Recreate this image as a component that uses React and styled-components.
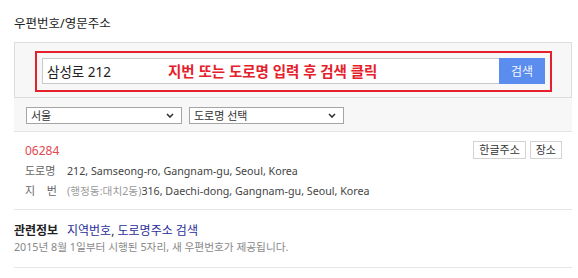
import React from "react";
import styled, { createGlobalStyle } from "styled-components";

// =================== Global ===================
const GlobalStyle = createGlobalStyle`
  body {
    margin: 0;
    background: #fff;
    font-family: "Noto Sans", "Noto Sans CJK KR", sans-serif;
    color: #333;
  }
  * {
    box-sizing: border-box;
  }
`;

// =================== Styled Components ===================
const Page = styled.div`
  padding: 15px 6px 0 14px;
`;

const Title = styled.h2`
  margin: 0;
  font-size: 12.5px;
  line-height: 18px;
  font-weight: normal;
  color: #222;
`;

const SearchPanel = styled.div`
  margin-top: 9px;
  background: #f7f7f7;
  border: 1px solid #dddddd;
  padding: 8px 19px 5px 20px;
`;

const Highlight = styled.div`
  position: relative;
  display: flex;
  border: 2px solid #e5202b;
  padding: 5px 5px 6px 5px;
`;

const SearchInput = styled.input`
  flex: 1;
  height: 26px;
  border: 1px solid #c9c9c9;
  border-right: none;
  background: #fff;
  padding: 0 4px;
  font: inherit;
  font-size: 13.5px;
  color: #222;
  outline: none;
`;

const SearchButton = styled.button`
  width: 46px;
  height: 26px;
  border: none;
  background: #5b8def;
  color: #f4f7ff;
  font: inherit;
  font-size: 12px;
  cursor: pointer;
`;

const Annotation = styled.span`
  position: absolute;
  left: 131px;
  top: 8px;
  line-height: 20px;
  font-size: 14.5px;
  font-weight: bold;
  color: #e5202b;
  pointer-events: none;
  white-space: nowrap;
`;

const FilterRow = styled.div`
  display: flex;
  gap: 7px;
  background: #f7f7f7;
  padding: 9px 12px 7px;
  border-bottom: 1px solid #e3e3e3;
`;

const SelectBox = styled.div`
  position: relative;
  width: ${(p) => p.$width}px;
  height: 17px;
  border: 1px solid #a5a5a5;
  background: #fff;
  padding-left: 4px;
  font-size: 11px;
  line-height: 15px;
  color: #333;

  svg {
    position: absolute;
    right: 7px;
    top: 5px;
  }
`;

const Results = styled.div`
  padding: 9px 10px 8px 11px;
  border-bottom: 1px solid #e6e6e6;
`;

const HeaderRow = styled.div`
  display: flex;
  justify-content: space-between;
  align-items: flex-start;
`;

const Zip = styled.div`
  font-size: 12px;
  line-height: 20px;
  color: #e34850;
`;

const Actions = styled.div`
  display: flex;
  gap: 4px;
`;

const SmallButton = styled.button`
  height: 18px;
  padding: 0 5px;
  border: 1px solid #d3d3d3;
  background: #fff;
  font: inherit;
  font-size: 11px;
  line-height: 16px;
  color: #333;
`;

const AddrRow = styled.div`
  display: flex;
  font-size: 10.7px;
  line-height: 20px;
  color: #444;
`;

const Label = styled.span`
  flex: none;
  width: 42px;
  color: #666;
  font-size: 11px;

  span {
    display: inline-block;
    width: 32px;
    text-align: justify;
    text-align-last: justify;
  }
`;

const Note = styled.span`
  color: #9a9a9a;
`;

const Info = styled.div`
  padding: 13px 0 12px;
  border-bottom: 1px solid #e6e6e6;
`;

const InfoLine = styled.div`
  font-size: 12px;
  line-height: 16px;

  strong {
    display: inline-block;
    width: 53px;
    color: #222;
  }

  a {
    color: #2a2f9a;
    text-decoration: none;
  }
`;

const InfoNote = styled.div`
  font-size: 10.7px;
  line-height: 16px;
  color: #888;
`;

// =================== Icons ===================
const Chevron = () => (
  <svg width="8" height="5" viewBox="0 0 8 5">
    <path d="M1 1 L4 4 L7 1" fill="none" stroke="#333" strokeWidth="1.6" />
  </svg>
);

// ====================== Component ======================
const App = () => {
  return (
    <Page>
      <GlobalStyle />
      <Title>우편번호/영문주소</Title>

      <SearchPanel>
        <Highlight>
          <SearchInput type="text" defaultValue="삼성로 212" />
          <SearchButton>검색</SearchButton>
          <Annotation>지번 또는 도로명 입력 후 검색 클릭</Annotation>
        </Highlight>
      </SearchPanel>

      <FilterRow>
        <SelectBox $width={156}>
          서울
          <Chevron />
        </SelectBox>
        <SelectBox $width={155}>
          도로명 선택
          <Chevron />
        </SelectBox>
      </FilterRow>

      <Results>
        <HeaderRow>
          <Zip>06284</Zip>
          <Actions>
            <SmallButton>한글주소</SmallButton>
            <SmallButton>장소</SmallButton>
          </Actions>
        </HeaderRow>
        <AddrRow>
          <Label>
            <span>도로명</span>
          </Label>
          212, Samseong-ro, Gangnam-gu, Seoul, Korea
        </AddrRow>
        <AddrRow>
          <Label>
            <span>지 번</span>
          </Label>
          <span>
            <Note>(행정동:대치2동)</Note>316, Daechi-dong, Gangnam-gu, Seoul, Korea
          </span>
        </AddrRow>
      </Results>

      <Info>
        <InfoLine>
          <strong>관련정보</strong>
          <a href="#">지역번호</a>, <a href="#">도로명주소 검색</a>
        </InfoLine>
        <InfoNote>2015년 8월 1일부터 시행된 5자리, 새 우편번호가 제공됩니다.</InfoNote>
      </Info>
    </Page>
  );
};

export default App;
